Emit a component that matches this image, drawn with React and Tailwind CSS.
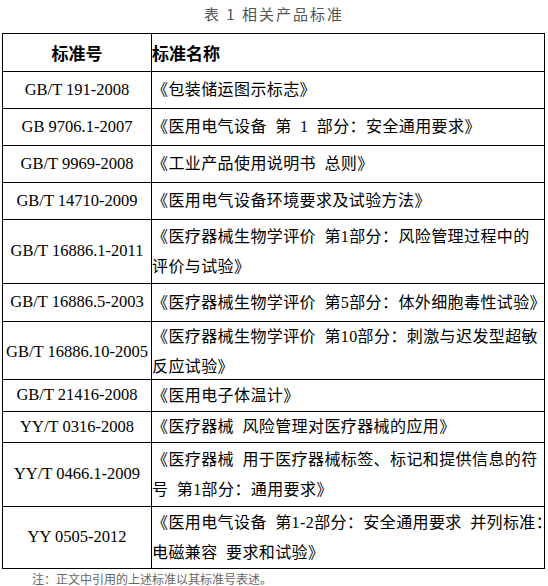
const rows = [
  { code: "GB/T 191-2008", h: "h-[37px]", lines: ["《包装储运图示标志》"] },
  { code: "GB 9706.1-2007", h: "h-[37px]", lines: ["《医用电气设备 第 1 部分：安全通用要求》"] },
  { code: "GB/T 9969-2008", h: "h-[37px]", lines: ["《工业产品使用说明书 总则》"] },
  { code: "GB/T 14710-2009", h: "h-[37px]", lines: ["《医用电气设备环境要求及试验方法》"] },
  {
    code: "GB/T 16886.1-2011",
    h: "h-[64px]",
    lines: ["《医疗器械生物学评价 第1部分：风险管理过程中的", "评价与试验》"],
  },
  { code: "GB/T 16886.5-2003", h: "h-[38px]", lines: ["《医疗器械生物学评价 第5部分：体外细胞毒性试验》"] },
  {
    code: "GB/T 16886.10-2005",
    h: "h-[58px]",
    lines: ["《医疗器械生物学评价 第10部分：刺激与迟发型超敏", "反应试验》"],
  },
  { code: "GB/T 21416-2008", h: "h-[32px]", lines: ["《医用电子体温计》"] },
  { code: "YY/T 0316-2008", h: "h-[31px]", lines: ["《医疗器械 风险管理对医疗器械的应用》"] },
  {
    code: "YY/T 0466.1-2009",
    h: "h-[64px]",
    lines: ["《医疗器械 用于医疗器械标签、标记和提供信息的符", "号 第1部分：通用要求》"],
  },
  {
    code: "YY 0505-2012",
    h: "h-[62px]",
    lines: ["《医用电气设备 第1-2部分：安全通用要求 并列标准：", "电磁兼容 要求和试验》"],
  },
];

const serif = "font-['Liberation_Serif','Noto_Sans_CJK_SC',serif]";
const cjk = "font-['Noto_Sans_CJK_SC',sans-serif]";

function App() {
  return (
    <div className="w-[548px] h-[586px] bg-white overflow-hidden text-black">
      <div className={`h-[33px] pt-[3px] text-center text-[15px] tracking-[2px] text-[#555] ${cjk}`}>
        表 1 相关产品标准
      </div>
      <div className="ml-[2px] w-[543px] border border-black">
        <div className="grid grid-cols-[149px_1fr] h-[37px]">
          <div className={`border-r border-black flex items-center justify-center text-[17px] font-bold ${cjk}`}>
            标准号
          </div>
          <div className={`flex items-center text-[17px] font-bold ${cjk}`}>标准名称</div>
        </div>
        {rows.map((r) => (
          <div key={r.code} className={`grid grid-cols-[149px_1fr] border-t border-black ${r.h}`}>
            <div className={`border-r border-black flex items-center justify-center text-[16.5px] whitespace-nowrap ${serif}`}>
              {r.code}
            </div>
            <div
              className={`flex flex-col justify-center text-[16px] tracking-[0.4px] [word-spacing:4px] whitespace-nowrap overflow-visible ${
                r.lines.length > 1 ? "leading-[30px]" : "leading-[20px]"
              } ${serif}`}
            >
              {r.lines.map((l) => (
                <div key={l}>{l}</div>
              ))}
            </div>
          </div>
        ))}
      </div>
      <div className={`pl-[32px] pt-[1px] text-[12px] text-[#666] ${cjk}`}>注：正文中引用的上述标准以其标准号表述。</div>
    </div>
  );
}

export default App;
